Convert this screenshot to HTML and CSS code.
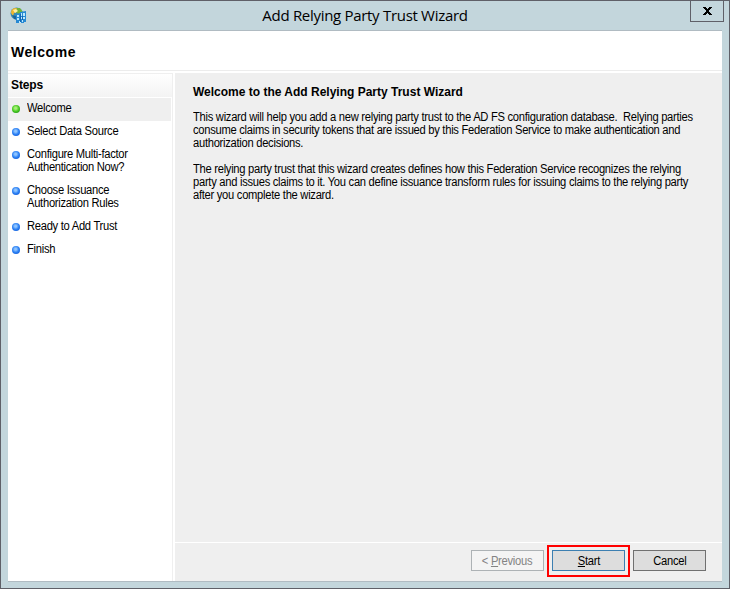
FILE: index.html
```html
<!DOCTYPE html>
<html lang="en">
<head>
<meta charset="utf-8">
<title>Add Relying Party Trust Wizard</title>
<link rel="stylesheet" href="styles.css">
</head>
<body>
<div class="window">
  <header class="titlebar">
    <svg class="app-icon" viewBox="0 0 18 18" width="18" height="18">
      <circle cx="6.5" cy="6.5" r="6" fill="#398eb5"/>
      <path d="M1 6Q1 1 6 1l3 1-2 3-3 1-1 3z" fill="#f0b62f"/>
      <path d="M7 1l3 0 3 4-4 3-3-3z" fill="#70b33a"/>
      <path d="M3 3l3-1 2 2-3 2z" fill="#fff0a0"/>
      <path d="M2 8l4 1 1 4-3-1z" fill="#1764a0"/>
      <path d="M6 7l4-1V5l6-1v11h-2v1h-3v-1H9v1H6z" fill="#2689d3"/>
      <path d="M7 8h2v2H7zm4-2h1v3h-1zm2 0h2v3h-2zM7 11h2v2H7zm4-1h1v2h-1zm2 0h2v2h-2zM9 14h2v2H9zm3-1h1v2h-1z" fill="#bce9fc"/>
      <path d="M10 7h1v8h-1zm2 2h1v4h-1z" fill="#1164b5"/>
    </svg>
    <h1 class="title">Add Relying Party Trust Wizard</h1>
    <button class="close" aria-label="Close"><svg viewBox="0 0 9 8" width="9" height="8" shape-rendering="crispEdges"><path d="M0 0h3v1h1v1h1V1h1V0h3v1H8v1H7v1H6v2h1v1h1v1h1v1H6V7H5V6H4v1H3v1H0V7h1V6h1V5h1V3H2V2H1V1H0z"/></svg></button>
  </header>
  <main class="client">
    <div class="banner"><h2 class="page-title">Welcome</h2></div>
    <div class="body">
      <nav class="sidebar">
        <h3 class="steps-title">Steps</h3>
        <ul class="steps">
          <li class="step current"><i class="dot"></i><span class="label">Welcome</span></li>
          <li class="step"><i class="dot"></i><span class="label">Select Data Source</span></li>
          <li class="step"><i class="dot"></i><span class="label">Configure Multi-factor<br>Authentication Now?</span></li>
          <li class="step"><i class="dot"></i><span class="label">Choose Issuance<br>Authorization Rules</span></li>
          <li class="step"><i class="dot"></i><span class="label">Ready to Add Trust</span></li>
          <li class="step"><i class="dot"></i><span class="label">Finish</span></li>
        </ul>
      </nav>
      <section class="content">
        <div class="copy">
          <h3 class="heading">Welcome to the Add Relying Party Trust Wizard</h3>
          <p>This wizard will help you add a new relying party trust to the AD FS configuration database.&nbsp; Relying parties<br>consume claims in security tokens that are issued by this Federation Service to make authentication and<br>authorization decisions.</p>
          <p>The relying party trust that this wizard creates defines how this Federation Service recognizes the relying<br>party and issues claims to it. You can define issuance transform rules for issuing claims to the relying party<br>after you complete the wizard.</p>
        </div>
        <footer class="actions">
          <button class="btn disabled" disabled><span>&lt; <u>P</u>revious</span></button>
          <button class="btn primary"><span><u>S</u>tart</span></button>
          <button class="btn"><span>Cancel</span></button>
        </footer>
      </section>
    </div>
  </main>
</div>
</body>
</html>
```
FILE: styles.css
```css
* { box-sizing: border-box; }
body { margin: 0; font: 12px/13px "Liberation Sans", Arial, sans-serif; color: #000; letter-spacing: -.3px; }
h1, h2, h3, p, ul { margin: 0; padding: 0; }
.window { width: 730px; height: 589px; border: 1px solid #5f6068; background: #c3d6dc; padding: 0 7px 6px; display: flex; flex-direction: column; }
.titlebar { height: 29px; flex: none; display: flex; justify-content: space-between; position: relative; }
.app-icon { margin: 6px 0 0 2px; }
.title { position: absolute; left: 0; right: 0; top: 4px; text-align: center; font: 15px/21px "Open Sans", "Noto Sans", sans-serif; letter-spacing: -.3px; }
.close { width: 34px; height: 22px; margin: -1px -2px 0 0; padding: 0; border: 1px solid #5f6068; background: transparent; display: flex; justify-content: center; align-items: center; position: relative; }
.client { flex: 1; min-height: 0; background: #fff; border-top: 1px solid #b0bbc2; border-bottom: 1px solid #b0bbc2; display: flex; flex-direction: column; }
.banner { height: 40px; flex: none; border-bottom: 1px solid #ececec; padding: 13px 0 0 3px; }
.page-title { font-size: 14px; line-height: 16px; letter-spacing: .55px; }
.body { flex: 1; display: flex; min-height: 0; padding-top: 2px; }
.sidebar { width: 165px; flex: none; border-right: 1px solid #efefef; border-top: 1px solid #efefef; }
.steps-title { height: 23px; padding: 5px 0 0 3px; font-size: 12px; line-height: 13px; background: linear-gradient(#fff, #f3f3f3); letter-spacing: -.1px; }
.steps { list-style: none; margin-top: 1px; padding-right: 1px; }
.step { display: flex; padding: 4px 0 6px 4px; white-space: nowrap; }
.step.current { background: #efefef; }
.label, .copy p { transform: scaleX(.932); transform-origin: 0 0; }
.dot { width: 8px; height: 8px; border-radius: 50%; flex: none; margin: 3px 7px 0 0; background: radial-gradient(circle at 45% 40%, #8fc5ff 0 15%, #2f83f5 48%, #1260dc 80%); }
.current .dot { background: radial-gradient(circle at 45% 40%, #a6ef78 0 15%, #4dcc25 48%, #229b13 80%); }
.content { flex: 1; min-width: 0; margin-left: 2px; background: #efefef; display: flex; flex-direction: column; }
.copy { flex: 1; padding: 13px 0 0 18px; white-space: nowrap; }
.heading { font-size: 12px; line-height: 13px; margin-bottom: 12px; letter-spacing: 0; }
.copy p { margin-bottom: 13px; }
.actions { height: 39px; flex: none; border-top: 1px solid #fff; display: flex; justify-content: flex-end; gap: 8px; padding: 7px 16px 0 0; }
.btn { width: 73px; height: 21px; padding: 1px 0 0; border: 1px solid #707070; background: #ddd; color: #000; font: inherit; letter-spacing: inherit; position: relative; }
.btn span { display: inline-block; transform: scaleX(.932); }
.btn.primary { border-color: #3c7fb1; }
.btn.primary::after { content: ""; position: absolute; inset: -6px -6px -7px; border: 2px solid #f00; }
.btn.disabled { border-color: #adb2b5; background: #f4f4f4; color: #838383; }
u { text-underline-offset: 1px; }
```
